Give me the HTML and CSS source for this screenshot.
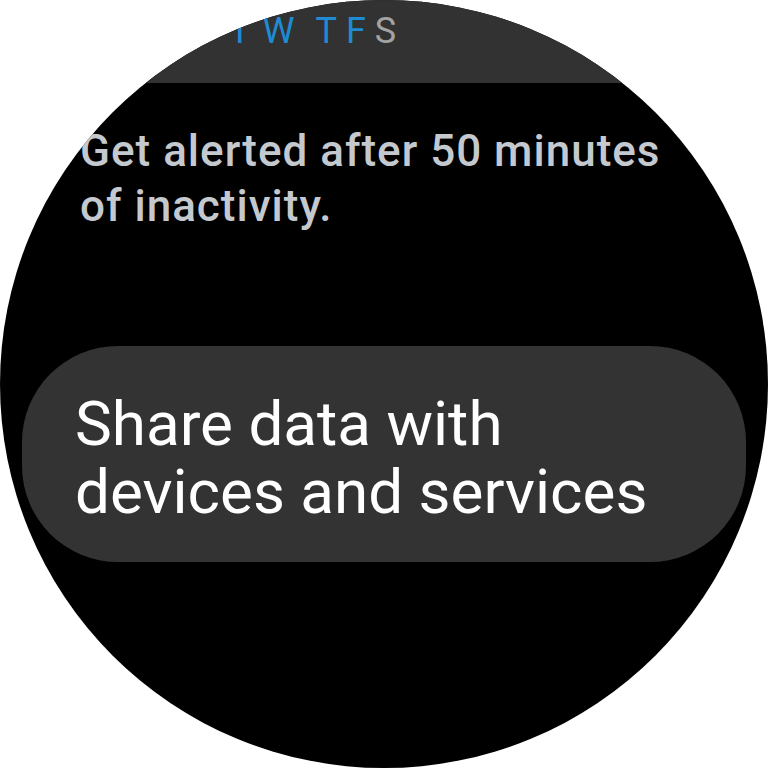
FILE: index.html
```html
<!DOCTYPE html>
<html lang="en">
<head>
<meta charset="utf-8">
<title>Inactivity alerts</title>
<link rel="stylesheet" href="styles.css">
</head>
<body>
<div class="watch">
  <div class="days-card">
    <div class="days">
      <span class="day on d-t1">T</span>
      <span class="day on d-w">W</span>
      <span class="day on d-t2">T</span>
      <span class="day on d-f">F</span>
      <span class="day off d-s">S</span>
    </div>
  </div>
  <p class="note">Get alerted after 50 minutes of inactivity.</p>
  <div class="share-card">
    <span class="share-text">Share data with devices and services</span>
  </div>
</div>
</body>
</html>
```
FILE: styles.css
```css
html, body {
  margin: 0;
  padding: 0;
  background: #ffffff;
}
body {
  width: 768px;
  height: 768px;
  overflow: hidden;
  font-family: Roboto, "Liberation Sans", sans-serif;
}
.watch {
  width: 768px;
  height: 768px;
  border-radius: 50%;
  background: #000000;
  overflow: hidden;
  display: flex;
  flex-direction: column;
}
.days-card {
  margin: 0 22px;
  height: 83px;
  flex: none;
  background: #323232;
  border-radius: 0 0 40px 40px;
  box-sizing: border-box;
  padding-top: 13px;
  padding-left: 207px;
}
.days {
  display: flex;
  font-size: 36px;
  line-height: 36px;
}
.day.on { color: #1f8bd2; }
.day.off { color: #a3a3a3; }
.d-w { margin-left: 12px; }
.d-t2 { margin-left: 21px; }
.d-f { margin-left: 9px; }
.d-s { margin-left: 9px; }
.note {
  margin: 41px 0 0 0;
  padding: 0 100px 0 80px;
  font-size: 44px;
  line-height: 55px;
  font-weight: 500;
  letter-spacing: 1px;
  color: #c4c9cf;
}
.share-card {
  margin: 112px 22px 0 22px;
  height: 216px;
  flex: none;
  box-sizing: border-box;
  background: #333333;
  border-radius: 96px;
  padding: 44px 60px 0 53px;
}
.share-text {
  display: block;
  font-size: 62px;
  line-height: 68px;
  color: #ffffff;
}
```
